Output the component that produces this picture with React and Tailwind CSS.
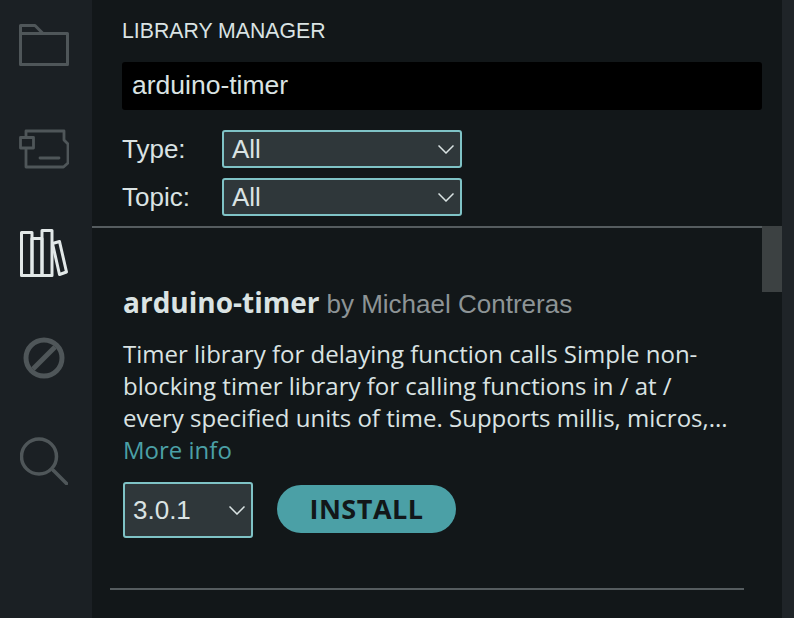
import React from "react";

const helvetica = "font-['Liberation_Sans',Arial,sans-serif]";
const openSans = "font-['Open_Sans',sans-serif]";

/* ---------- SIDEBAR ICONS ---------- */

const FolderIcon = () => (
  <svg width="50" height="42" viewBox="0 0 50 42" fill="none" stroke="#4f5659" strokeWidth="3" strokeLinejoin="round">
    <path d="M1.5 1.5 H16 L24 9.5 H48.5 V40.5 H1.5 Z" />
    <path d="M1.5 9.5 H24" />
  </svg>
);

const BoardIcon = () => (
  <svg width="50" height="40" viewBox="0 0 50 40" fill="none" stroke="#4f5659" strokeWidth="2.8" strokeLinejoin="round">
    <path d="M7 8 V2 H45 V11 L49 15 V34 L44.5 38 H7 V19" />
    <rect x="1.5" y="8.5" width="13" height="10.5" />
    <path d="M21 29 H40" strokeLinecap="round" />
  </svg>
);

const BooksIcon = () => (
  <svg width="48" height="48" viewBox="0 0 48 48" fill="none" stroke="#e2e8e8" strokeWidth="3" strokeLinejoin="round">
    <path d="M1.5 3.5 H12 V46.5 H1.5 Z" />
    <path d="M12 9.5 H22 V46.5 H12 Z" />
    <path d="M22 1.5 H32 V46.5 H22 Z" />
    <path d="M32.5 14.5 L39.5 12.5 L46.5 43 L39.5 45.5 Z" />
  </svg>
);

const BlockedIcon = () => (
  <svg width="42" height="42" viewBox="0 0 42 42" fill="none" stroke="#4f5659" strokeWidth="5">
    <circle cx="21" cy="21" r="18" />
    <path d="M10 32 L32 10" />
  </svg>
);

const SearchIcon = () => (
  <svg width="48" height="48" viewBox="0 0 48 48" fill="none" stroke="#4f5659" strokeWidth="3.5" strokeLinecap="round">
    <circle cx="19" cy="19.5" r="17.5" />
    <path d="M33 33 L46.5 46.5" />
  </svg>
);

const Chevron = () => (
  <svg width="16" height="9" viewBox="0 0 16 9" fill="none" stroke="#dae3e3" strokeWidth="1.5">
    <path d="M0.5 0.5 L8 8 L15.5 0.5" />
  </svg>
);

/* ---------- UI HELPERS ---------- */

const Select = ({ value, className = "" }) => (
  <div className={`flex items-center justify-between rounded-[3px] border-2 border-[#7fc3c6] bg-[#2f373a] pl-2 pr-[6px] text-[#dae3e3] ${helvetica} ${className}`}>
    <span>{value}</span>
    <Chevron />
  </div>
);

const FilterRow = ({ label }) => (
  <div className="flex items-center">
    <span className={`w-[100px] text-[26px] leading-none text-[#dae3e3] ${helvetica}`}>{label}</span>
    <Select value="All" className="h-[38px] w-[240px] text-[26px]" />
  </div>
);

export default function App() {
  return (
    <div className="flex h-[618px] w-[794px] overflow-hidden bg-[#121719]">
      {/* activity bar */}
      <div className="flex w-[92px] shrink-0 flex-col items-center bg-[#1b2024] pr-[4px] pt-[24px]">
        <FolderIcon />
        <div className="mt-[63px]"><BoardIcon /></div>
        <div className="mt-[60px]"><BooksIcon /></div>
        <div className="mt-[60px]"><BlockedIcon /></div>
        <div className="mt-[58px]"><SearchIcon /></div>
      </div>

      {/* library panel */}
      <div className="flex min-w-0 flex-1 flex-col">
        <div className="h-[226px] shrink-0 pl-[30px] pr-[20px] pt-[19px]">
          <div className={`text-[21.25px] leading-[24px] text-[#dae3e3] ${helvetica}`}>LIBRARY MANAGER</div>
          <div className={`mt-[19px] flex h-[48px] items-center rounded-[3px] bg-black pl-[10px] text-[26.5px] text-[#dae3e3] ${helvetica}`}>
            arduino-timer
          </div>
          <div className="mt-[20px] flex flex-col gap-[10px]">
            <FilterRow label="Type:" />
            <FilterRow label="Topic:" />
          </div>
        </div>

        <div className="flex min-h-0 flex-1">
          <div className="min-w-0 flex-1 border-t-2 border-[#555c5f]">
            <div className="pl-[31px] pr-[18px] pt-[56px]">
              <div className="flex items-baseline whitespace-nowrap">
                <span className={`text-[28px] font-bold leading-[36px] text-[#dae3e3] ${openSans}`}>arduino-timer</span>
                <span className={`ml-[7px] text-[26px] leading-[36px] text-[#8d9496] ${helvetica}`}>by Michael Contreras</span>
              </div>
              <div className={`mt-[16px] text-[24px] leading-[32px] text-[#dae3e3] ${openSans}`}>
                <div className="whitespace-nowrap">Timer library for delaying function calls Simple non-</div>
                <div className="whitespace-nowrap">blocking timer library for calling functions in / at /</div>
                <div className="whitespace-nowrap">every specified units of time. Supports millis, micros,...</div>
                <div className="whitespace-nowrap text-[#4ba0a6]">More info</div>
              </div>
              <div className="mt-[16px] flex items-start gap-[24px]">
                <Select value="3.0.1" className="h-[56px] w-[130px] text-[26px]" />
                <button className={`mt-[3px] flex h-[48px] w-[179px] items-center justify-center rounded-full bg-[#4ba0a6] text-[27px] font-bold tracking-[0.5px] text-[#121719] ${openSans}`}>
                  INSTALL
                </button>
              </div>
            </div>
            <div className="ml-[18px] mr-[18px] mt-[50px] h-[2px] bg-[#555c5f]" />
          </div>
          <div className="w-[20px] shrink-0">
            <div className="h-[66px] bg-[#3c4142]" />
          </div>
        </div>
      </div>

      {/* right edge */}
      <div className="w-[12px] shrink-0 bg-[#1f2428]" />
    </div>
  );
}
